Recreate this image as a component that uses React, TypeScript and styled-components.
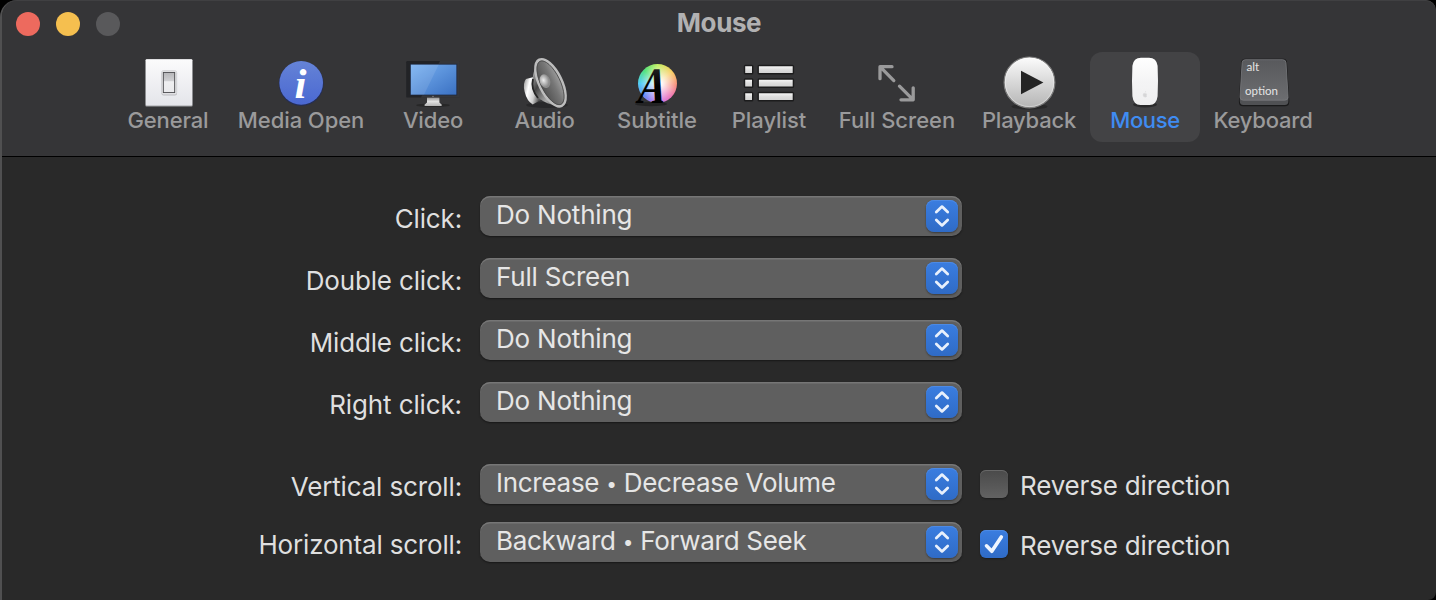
import React from 'react';
import styled, { createGlobalStyle } from 'styled-components';

const GlobalStyle = createGlobalStyle`
  * { box-sizing: border-box; }
  body { margin: 0; background: #000; overflow: hidden; font-family: Inter, "Liberation Sans", sans-serif; }
`;

const Window = styled.main`
  width: 1436px;
  height: 600px;
  display: flex;
  flex-direction: column;
  overflow: hidden;
  background: #292929;
  border-left: 2px solid #505051;
  border-radius: 17px 10px 8px 0;
`;

const Header = styled.header`
  height: 157px;
  flex: none;
  background: #353537;
  border-bottom: 1px solid #000;
  box-shadow: inset 0 1px 0 #404042;
  border-radius: 15px 10px 0 0;
`;

const TitleBar = styled.div`
  height: 52px;
  display: grid;
  grid-template-columns: 1fr auto 1fr;
`;

const Lights = styled.div`
  display: flex;
  gap: 16px;
  padding: 12px 0 0 14px;
`;

const Light = styled.span<{ $color: string }>`
  width: 24px;
  height: 24px;
  border-radius: 50%;
  background: ${(p) => p.$color};
`;

const Title = styled.h1<{ $spacing: number }>`
  margin: 0;
  font-size: 26px;
  font-weight: 700;
  line-height: 46px;
  color: #b1b1b2;
  letter-spacing: ${(p) => p.$spacing}px;
`;

const Toolbar = styled.nav`
  display: flex;
  padding-left: 111px;
`;

const ToolButton = styled.button<{ $width: number; $active?: boolean }>`
  width: ${(p) => p.$width}px;
  height: 90px;
  flex: none;
  display: flex;
  flex-direction: column;
  align-items: center;
  padding: 2px 0 0;
  border: 0;
  border-radius: 12px;
  font-family: inherit;
  background: ${(p) => (p.$active ? '#434345' : 'transparent')};
  color: ${(p) => (p.$active ? '#3f8cf2' : '#9a9a9b')};
`;

const Icon = styled.svg`
  width: 64px;
  height: 56px;
  flex: none;
  display: block;
  overflow: visible;
`;

const ToolLabel = styled.span<{ $spacing: number }>`
  font-size: 22px;
  font-weight: 500;
  line-height: 20px;
  white-space: nowrap;
  letter-spacing: ${(p) => p.$spacing}px;
`;

const Form = styled.section`
  display: flex;
  flex-direction: column;
  padding-top: 39px;
`;

const Row = styled.div<{ $gap: number }>`
  display: grid;
  grid-template-columns: 460px 500px 1fr;
  height: 40px;
  margin-bottom: ${(p) => p.$gap}px;
  color: #dfdfdf;
  font-size: 26px;
  line-height: 40px;
  white-space: nowrap;
`;

const RowLabel = styled.label<{ $spacing: number }>`
  text-align: right;
  padding-top: 3px;
  letter-spacing: ${(p) => p.$spacing}px;
`;

const Popup = styled.button`
  height: 40px;
  margin-left: 18px;
  width: 482px;
  display: flex;
  justify-content: space-between;
  align-items: center;
  padding: 0 4px 0 16px;
  border: 0;
  border-radius: 10px;
  background: #5f5f5f;
  box-shadow: inset 0 1.5px 0 #767676, 0 1px 2px rgba(0, 0, 0, 0.45);
  font: inherit;
  color: #e6e6e6;
`;

const PopupText = styled.span<{ $spacing: number }>`
  line-height: 38px;
  height: 40px;
  letter-spacing: ${(p) => p.$spacing}px;
`;

const Dot = styled.span`
  font-size: 19px;
  line-height: 1;
  vertical-align: 1px;
`;

const Stepper = styled.span`
  width: 32px;
  height: 32px;
  border-radius: 8px;
  background: linear-gradient(#3a7de0, #2f6bc6);
  box-shadow: inset 0 1px 0 #4d8ae4, 0 1px 2px rgba(0, 0, 0, 0.4);
  svg { display: block; }
`;

const CheckOption = styled.label<{ $top: number }>`
  display: flex;
  align-items: flex-start;
  gap: 12px;
  padding: ${(p) => p.$top}px 0 0 18px;
`;

const CheckBox = styled.span<{ $checked: boolean }>`
  width: 28px;
  height: 28px;
  flex: none;
  border-radius: 6px;
  background: ${(p) => (p.$checked ? 'linear-gradient(#3a7de0, #2f6bc6)' : 'linear-gradient(#4a4a4a, #626262)')};
  box-shadow: inset 0 1px 0 ${(p) => (p.$checked ? '#4d8ae4' : '#686868')}, 0 1px 2px rgba(0, 0, 0, 0.35);
  svg { display: block; }
`;

const CheckText = styled.span<{ $spacing: number }>`
  line-height: 32px;
  letter-spacing: ${(p) => p.$spacing}px;
`;

const Wheel = styled.div`
  width: 39px;
  height: 39px;
  border-radius: 50%;
  background:
    radial-gradient(circle at 55% 50%, #fff 0 6%, rgba(255, 255, 255, 0.1) 66%),
    conic-gradient(#b8ec50, #f6c23c 50deg, #f5705a 95deg, #e955a8 135deg, #c46cf0 180deg, #5c7cf5 225deg, #40c8f5 270deg, #40e070 315deg, #b8ec50);
`;

const GeneralIcon = () => (
  <Icon viewBox="0 0 64 56">
    <defs>
      <linearGradient id="plate" x2="0" y2="1"><stop stopColor="#fbfbfc" /><stop offset="1" stopColor="#e4e5ea" /></linearGradient>
      <linearGradient id="rocker" x2="0" y2="1"><stop stopColor="#b5b5b8" /><stop offset=".42" stopColor="#d0d0d3" /><stop offset=".46" stopColor="#efeff1" /><stop offset="1" stopColor="#e9e9ec" /></linearGradient>
    </defs>
    <rect x="9.4" y="5.2" width="47.2" height="47.4" rx="1" fill="#a2a3a6" />
    <rect x="9.8" y="5.2" width="46.4" height="46.2" rx="1" fill="url(#plate)" />
    <rect x="25.5" y="17.5" width="15.5" height="24" rx="2" fill="#bbbcc0" />
    <rect x="25.5" y="16.5" width="15.2" height="24" rx="2" fill="#f0f0f2" stroke="#c9cacd" strokeWidth=".6" />
    <rect x="27.3" y="18.4" width="11.4" height="20.2" fill="url(#rocker)" stroke="#4d4d50" strokeWidth="1" />
  </Icon>
);

const MediaIcon = () => (
  <Icon viewBox="0 0 64 56">
    <defs><linearGradient id="info" x2="0" y2="1"><stop stopColor="#6583d6" /><stop offset="1" stopColor="#4a68d2" /></linearGradient></defs>
    <circle cx="32.2" cy="29.6" r="22.4" fill="#202c5c" opacity=".8" />
    <circle cx="32.2" cy="28.9" r="21.8" fill="url(#info)" />
    <text x="25.4" y="44" fontFamily="Liberation Serif, serif" fontWeight="700" fontStyle="italic" fontSize="43" fill="#fff">i</text>
  </Icon>
);

const VideoIcon = () => (
  <Icon viewBox="0 0 64 56">
    <defs>
      <linearGradient id="screen" x2="1" y2="1"><stop stopColor="#79b2f2" /><stop offset="1" stopColor="#3a70c2" /></linearGradient>
      <linearGradient id="stand" x2="0" y2="1"><stop stopColor="#8c8c8c" /><stop offset=".5" stopColor="#e2e2e2" /><stop offset="1" stopColor="#b5b5b5" /></linearGradient>
    </defs>
    <ellipse cx="32" cy="51.3" rx="17" ry="1.8" fill="#1b1b1c" opacity=".55" />
    <path d="M26 43h12.400v5.500l2.400 2.200q.4 1.200-1 1.200H24.400q-1.300 0-.9-1.200l2.500-2.200z" fill="url(#stand)" />
    <rect x="5.2" y="7" width="53.6" height="36.6" rx="1.2" fill="#222326" />
    <path d="M39 7h18.600q1.200 0 1.200 1.200V43.600H20z" fill="#45474a" opacity=".55" />
    <rect x="9.400" y="10.200" width="46.400" height="30.800" fill="url(#screen)" stroke="#1c2740" strokeWidth=".7" />
    <path d="M37.800 10.500H9.700v30.200H23z" fill="#fff" opacity=".1" />
    <circle cx="32" cy="42.400" r=".7" fill="#8e8e8e" />
  </Icon>
);

const AudioIcon = () => (
  <Icon viewBox="0 0 64 56">
    <defs>
      <linearGradient id="magnet" x2="1" y2=".35"><stop stopColor="#8b8b8b" /><stop offset=".35" stopColor="#fff" /><stop offset=".7" stopColor="#cfcfcf" /><stop offset="1" stopColor="#555" /></linearGradient>
      <linearGradient id="basket" x2="1" y2="1"><stop stopColor="#c4c4c4" /><stop offset=".35" stopColor="#444" /><stop offset=".7" stopColor="#aaa" /><stop offset="1" stopColor="#555" /></linearGradient>
      <linearGradient id="cone" x2="1" y2="0"><stop stopColor="#4e4e4e" /><stop offset=".6" stopColor="#767676" /><stop offset="1" stopColor="#a2a2a2" /></linearGradient>
      <radialGradient id="dome" cx=".4" cy=".4"><stop stopColor="#eee" /><stop offset="1" stopColor="#8c8c8c" /></radialGradient>
    </defs>
    <ellipse cx="34" cy="51" rx="21" ry="3" fill="#202021" opacity=".6" />
    <path d="M13 25q-3.500 4-1.300 13t8 12.500l9-5-6-23z" fill="url(#magnet)" />
    <path d="M22.500 13q-3.500 8-3 17.500T27 45q6 5 18 7z" fill="url(#basket)" />
    <path d="M20 25q-2.500 10 5 19" fill="none" stroke="#242424" strokeWidth="1.800" />
    <g transform="rotate(-26 37.500 28.800)">
      <ellipse cx="37.500" cy="28.800" rx="11.200" ry="25.600" fill="url(#cone)" stroke="#bdbdbd" strokeWidth="2.600" />
      <ellipse cx="37.500" cy="28.800" rx="9.600" ry="23.900" fill="none" stroke="#4a4a4a" strokeWidth=".8" />
    </g>
    <ellipse cx="32" cy="27.200" rx="5.200" ry="7" transform="rotate(-20 32 27.200)" fill="url(#dome)" />
  </Icon>
);

const SubtitleIcon = () => (
  <Icon viewBox="0 0 64 56">
    <defs><linearGradient id="ink" x2="0" y2="1"><stop stopColor="#333" /><stop offset=".5" stopColor="#000" /></linearGradient></defs>
    <ellipse cx="26" cy="50" rx="16" ry="2.200" fill="#1c1c1d" opacity=".7" />
    <foreignObject x="13.400" y="10" width="39" height="39"><Wheel /></foreignObject>
    <text transform="translate(10 49.200) skewX(-13) scale(.76 1)" fontFamily="Liberation Serif, serif" fontWeight="700" fontSize="51" fill="url(#ink)">A</text>
  </Icon>
);

const PlaylistIcon = () => (
  <Icon viewBox="0 0 64 56">
    <defs><linearGradient id="bar" x2="0" y2="1"><stop stopColor="#fafafa" /><stop offset=".5" stopColor="#dedede" /><stop offset="1" stopColor="#d2d2d2" /></linearGradient></defs>
    {[11.5, 25, 38.5].map((y) => (
      <g key={y} fill="url(#bar)" stroke="#1c1c1d" strokeWidth="1.4">
        <rect x="7.5" y={y} width="8.2" height="8.2" rx=".8" />
        <rect x="21.2" y={y} width="35.2" height="8.2" rx=".8" />
      </g>
    ))}
  </Icon>
);

const FullScreenIcon = () => (
  <Icon viewBox="0 0 64 56">
    <path d="M27 12.700H15V24.700M15.500 13.200 28.800 26.600M36 45.800h12.200V33.800M47.700 45.300 34.500 32.200" fill="none" stroke="#9a9a9b" strokeWidth="3.300" strokeLinecap="round" strokeLinejoin="round" />
  </Icon>
);

const PlaybackIcon = () => (
  <Icon viewBox="0 0 64 56">
    <defs><linearGradient id="play" x2="0" y2="1"><stop stopColor="#fcfcfc" /><stop offset="1" stopColor="#b4b4b4" /></linearGradient></defs>
    <ellipse cx="32.5" cy="52.5" rx="18" ry="3" fill="#1f1f20" opacity=".6" />
    <circle cx="32.5" cy="28.4" r="25.4" fill="url(#play)" stroke="#7c7c7c" strokeWidth="1.2" />
    <circle cx="32.5" cy="28.4" r="24.2" fill="none" stroke="#fff" strokeOpacity=".35" />
    <path d="M24 16.8v23.4l22.4-11.7z" fill="#242424" />
  </Icon>
);

const MouseIcon = () => (
  <Icon viewBox="0 0 64 56">
    <defs><linearGradient id="shell" x2="0" y2="1"><stop stopColor="#fff" /><stop offset=".5" stopColor="#f4f4f5" /><stop offset="1" stopColor="#efeff0" /></linearGradient></defs>
    <ellipse cx="32" cy="50.5" rx="12" ry="3" fill="#202021" opacity=".7" />
    <path d="M28 3.700h8q7.500 0 8.600 8 .8 15.500 0 30.500Q43.600 50.900 36.500 50.900h-9Q20.400 50.900 19.400 42.200q-.8-15 0-30.500 1.100-8 8.600-8z" fill="url(#shell)" />
    <path d="M32 39.500q-2-.6-2 1.500t2 2.200q1.700 0 1.900-1.200-1.200-.6 0-1.900-.8-.9-1.900-.6zM32 38.700q.1-1.300 1.100-1.600" fill="#d6d6d7" stroke="#dcdcdd" strokeWidth=".4" />
  </Icon>
);

const KeyboardIcon = () => (
  <Icon viewBox="0 0 64 56">
    <defs><linearGradient id="key" x2="0" y2="1"><stop stopColor="#58595c" /><stop offset="1" stopColor="#6c6d70" /></linearGradient></defs>
    <path d="M14 4.700h38.500q3.300 0 3.500 3.600L58.300 47q.2 5.300-4.300 5.300H12q-4.300 0-4.100-5.300L10.200 8.300q.2-3.600 3.800-3.600z" fill="#1a1a1b" />
    <path d="M8.800 43v3.800q0 4.300 3.500 4.300h41.500q3.600 0 3.600-4.300V43z" fill="#505154" />
    <path d="M14.200 5.700h37.600q3 0 3.200 3l2.100 34.200q.2 3.300-3.300 3.300H12.300q-3.500 0-3.300-3.300l2.100-34.200q.2-3 3.100-3z" fill="url(#key)" stroke="#7a7b7f" strokeWidth=".8" />
    <g fontFamily="Lato, sans-serif" fill="#e4e4e4">
      <text x="15.500" y="16.800" fontSize="10.500" textLength="12.800" lengthAdjust="spacingAndGlyphs">alt</text>
      <text x="14" y="41.400" fontSize="11.800" textLength="33" lengthAdjust="spacingAndGlyphs">option</text>
    </g>
  </Icon>
);

const tools = [
  { label: 'General', width: 110, spacing: -0.15, Glyph: GeneralIcon },
  { label: 'Media Open', width: 156, spacing: -0.08, Glyph: MediaIcon },
  { label: 'Video', width: 108, spacing: -0.15, Glyph: VideoIcon },
  { label: 'Audio', width: 115, spacing: -0.3, Glyph: AudioIcon },
  { label: 'Subtitle', width: 110, spacing: 0, Glyph: SubtitleIcon },
  { label: 'Playlist', width: 114, spacing: -0.08, Glyph: PlaylistIcon },
  { label: 'Full Screen', width: 142, spacing: 0, Glyph: FullScreenIcon },
  { label: 'Playback', width: 122, spacing: -0.22, Glyph: PlaybackIcon },
  { label: 'Mouse', width: 110, spacing: -0.35, Glyph: MouseIcon, active: true },
  { label: 'Keyboard', width: 126, spacing: -0.22, Glyph: KeyboardIcon },
];

type Setting = { label: string; spacing: number; value: string[]; valueSpacing: number; gap: number; reverse?: boolean; checkTop?: number };

const settings: Setting[] = [
  { label: 'Click:', spacing: -0.15, value: ['Do Nothing'], valueSpacing: -0.2, gap: 22 },
  { label: 'Double click:', spacing: -0.17, value: ['Full Screen'], valueSpacing: -0.2, gap: 22 },
  { label: 'Middle click:', spacing: -0.17, value: ['Do Nothing'], valueSpacing: -0.2, gap: 22 },
  { label: 'Right click:', spacing: -0.12, value: ['Do Nothing'], valueSpacing: -0.2, gap: 42 },
  { label: 'Vertical scroll:', spacing: -0.15, value: ['Increase', 'Decrease Volume'], valueSpacing: -0.28, gap: 18, reverse: false, checkTop: 6 },
  { label: 'Horizontal scroll:', spacing: -0.18, value: ['Backward', 'Forward Seek'], valueSpacing: -0.28, gap: 0, reverse: true, checkTop: 8 },
];

export default function App() {
  return (
    <>
      <GlobalStyle />
      <Window>
        <Header>
          <TitleBar>
            <Lights>
              <Light $color="#ed6a5e" />
              <Light $color="#f5bf4f" />
              <Light $color="#59595b" />
            </Lights>
            <Title $spacing={-0.4}>Mouse</Title>
          </TitleBar>
          <Toolbar>
            {tools.map(({ label, width, spacing, Glyph, active }) => (
              <ToolButton key={label} $width={width} $active={active}>
                <Glyph />
                <ToolLabel $spacing={spacing}>{label}</ToolLabel>
              </ToolButton>
            ))}
          </Toolbar>
        </Header>
        <Form>
          {settings.map((s) => (
            <Row key={s.label} $gap={s.gap}>
              <RowLabel $spacing={s.spacing}>{s.label}</RowLabel>
              <Popup>
                <PopupText $spacing={s.valueSpacing}>
                  {s.value[0]}
                  {s.value[1] && <> <Dot>•</Dot> {s.value[1]}</>}
                </PopupText>
                <Stepper>
                  <svg width="32" height="32" viewBox="0 0 32 32" fill="none" stroke="#e8f0fc" strokeWidth="2.800" strokeLinecap="round" strokeLinejoin="round">
                    <path d="M10.300 12 16 6.600l5.700 5.400M10.300 20l5.700 5.400 5.700-5.400" />
                  </svg>
                </Stepper>
              </Popup>
              {s.reverse !== undefined && (
                <CheckOption $top={s.checkTop ?? 0}>
                  <CheckBox $checked={s.reverse}>
                    {s.reverse && (
                      <svg width="28" height="28" viewBox="0 0 28 28" fill="none" stroke="#eef5ff" strokeWidth="3.600" strokeLinecap="round" strokeLinejoin="round">
                        <path d="m6.500 15.800 5.300 5.500L21.300 7" />
                      </svg>
                    )}
                  </CheckBox>
                  <CheckText $spacing={-0.18}>Reverse direction</CheckText>
                </CheckOption>
              )}
            </Row>
          ))}
        </Form>
      </Window>
    </>
  );
}
